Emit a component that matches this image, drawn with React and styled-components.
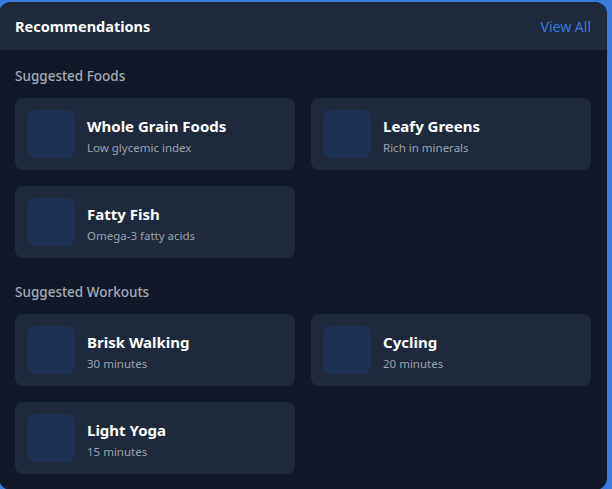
import React from "react";
import styled, { createGlobalStyle } from "styled-components";

const GlobalStyle = createGlobalStyle`
  html, body {
    margin: 0;
    padding: 0;
    background: #3a7bdb;
    overflow: hidden;
  }
  * { box-sizing: border-box; }
`;

const foods = [
  { title: "Whole Grain Foods", sub: "Low glycemic index" },
  { title: "Leafy Greens", sub: "Rich in minerals" },
  { title: "Fatty Fish", sub: "Omega-3 fatty acids" },
];

const workouts = [
  { title: "Brisk Walking", sub: "30 minutes" },
  { title: "Cycling", sub: "20 minutes" },
  { title: "Light Yoga", sub: "15 minutes" },
];

const Section = ({ heading, items }) => (
  <Group>
    <GroupHeading>{heading}</GroupHeading>
    <Grid>
      {items.map((item) => (
        <Item key={item.title}>
          <Thumb />
          <ItemText>
            <ItemTitle>{item.title}</ItemTitle>
            <ItemSub>{item.sub}</ItemSub>
          </ItemText>
        </Item>
      ))}
    </Grid>
  </Group>
);

const App = () => {
  return (
    <>
      <GlobalStyle />
      <Panel>
        <Header>
          <Title>Recommendations</Title>
          <ViewAll href="#">View All</ViewAll>
        </Header>
        <Body>
          <Section heading="Suggested Foods" items={foods} />
          <Section heading="Suggested Workouts" items={workouts} />
        </Body>
      </Panel>
    </>
  );
};

const Panel = styled.div`
  margin: 2px 5px 0 -1px;
  border-radius: 12px;
  overflow: hidden;
  background: #111827;
  font-family: "Noto Sans", "Open Sans", sans-serif;
`;

const Header = styled.div`
  height: 48px;
  padding: 0 16px;
  display: flex;
  align-items: center;
  justify-content: space-between;
  background: #1e293b;
`;

const Title = styled.h2`
  margin: 0;
  font-size: 14.5px;
  font-weight: 700;
  color: #ffffff;
`;

const ViewAll = styled.a`
  font-size: 14px;
  color: #3b7ddd;
  text-decoration: none;
`;

const Body = styled.div`
  padding: 16px;
  display: flex;
  flex-direction: column;
  gap: 24px;
`;

const Group = styled.div`
  display: flex;
  flex-direction: column;
  gap: 12px;
`;

const GroupHeading = styled.h3`
  margin: 0;
  font-size: 13.5px;
  line-height: 20px;
  font-weight: 500;
  color: #a3acb9;
`;

const Grid = styled.div`
  display: grid;
  grid-template-columns: 1fr 1fr;
  gap: 16px;
`;

const Item = styled.div`
  display: flex;
  align-items: center;
  gap: 12px;
  height: 72px;
  padding: 12px;
  border-radius: 8px;
  background: #1e293b;
`;

const Thumb = styled.div`
  width: 48px;
  height: 48px;
  flex-shrink: 0;
  border-radius: 8px;
  background: #1e3050;
`;

const ItemText = styled.div`
  padding-top: 3px;
`;

const ItemTitle = styled.div`
  font-size: 15px;
  line-height: 22px;
  font-weight: 700;
  color: #ffffff;
`;

const ItemSub = styled.div`
  margin-top: 2px;
  font-size: 11.5px;
  line-height: 18px;
  color: #9ca3af;
`;

export default App;
